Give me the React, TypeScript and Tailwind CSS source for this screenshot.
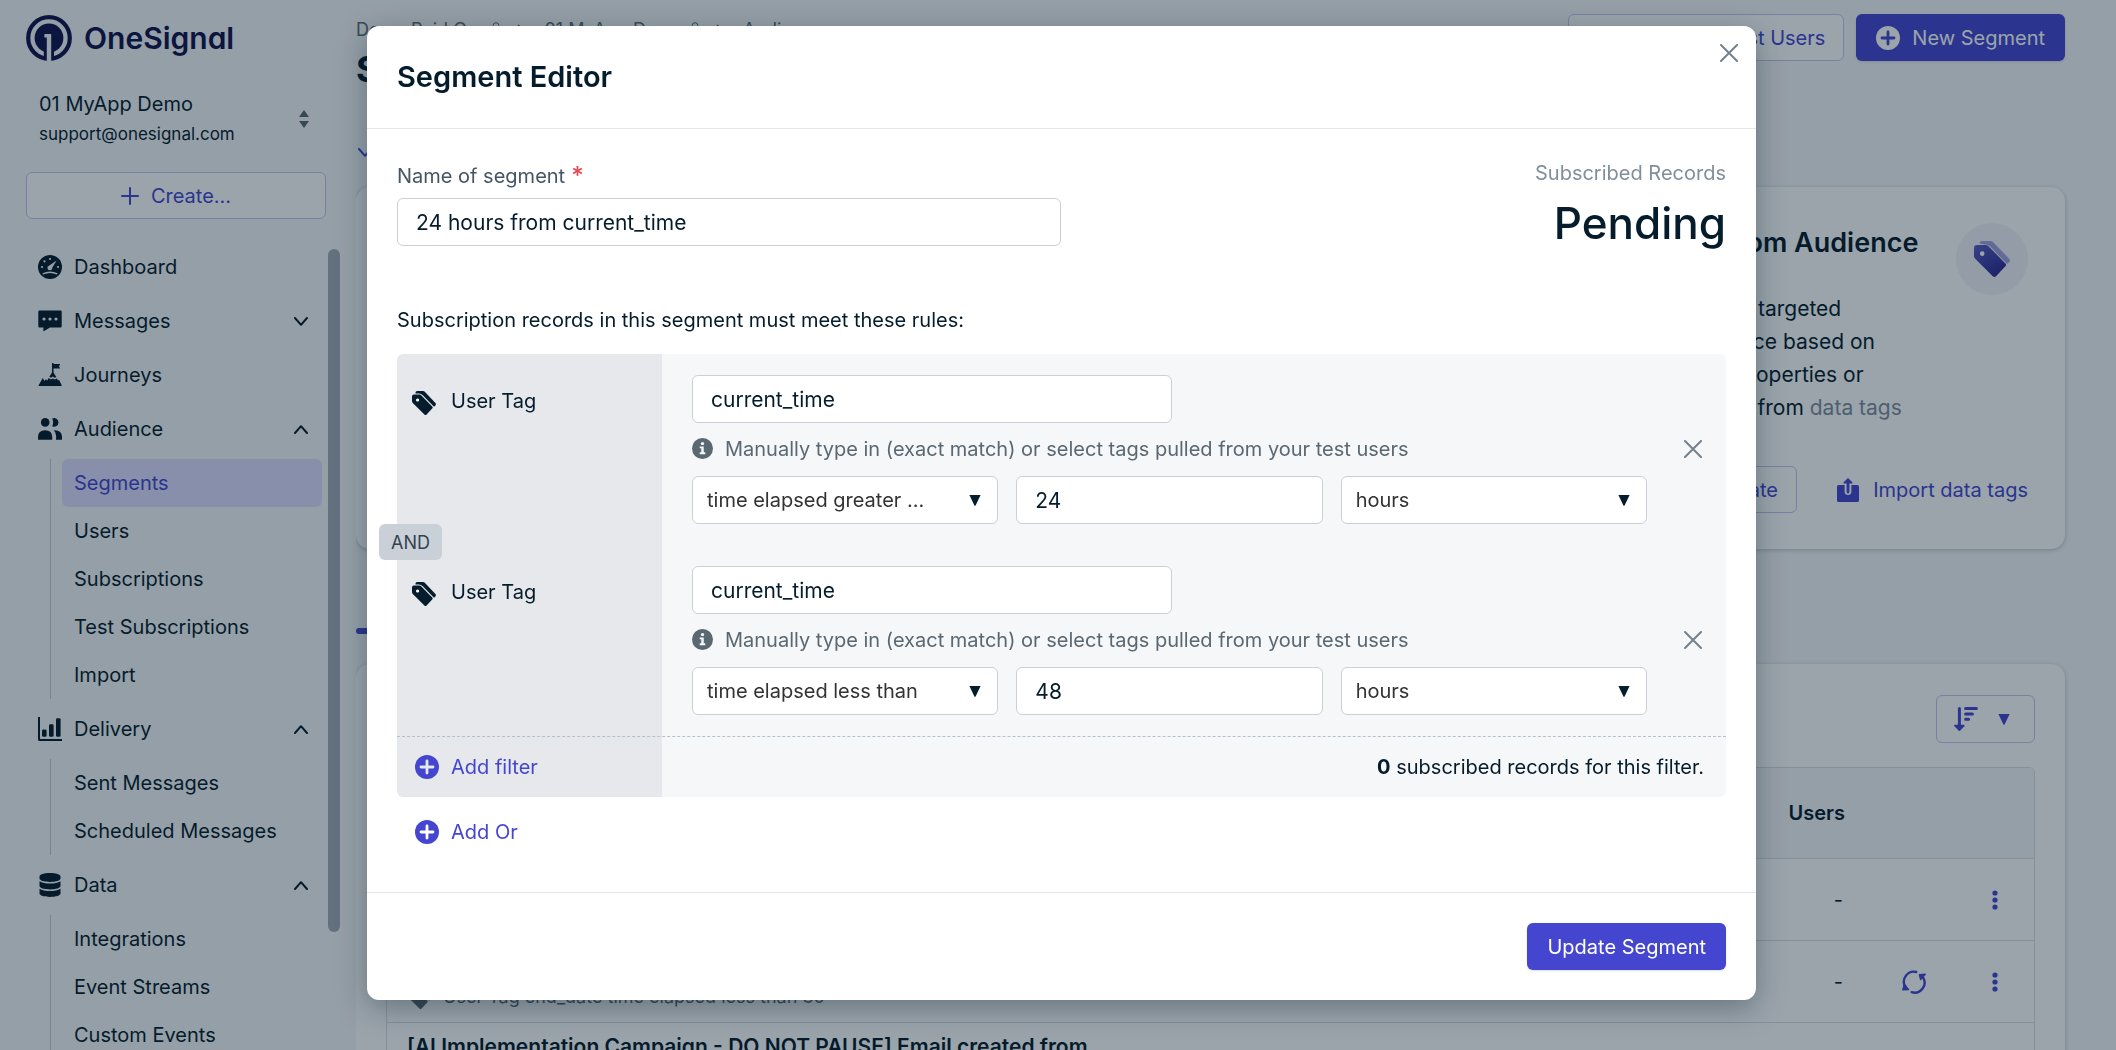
import React from 'react';
import { FaDatabase } from 'react-icons/fa';

type IconProps = { className?: string };

const LogoMark = () => (
  <svg viewBox="0 0 46 46" className="size-[46px] text-[#11124c]">
    <circle cx="23" cy="23" r="20.8" fill="none" stroke="currentColor" strokeWidth="4.2" />
    <circle cx="23" cy="23" r="14.4" fill="currentColor" />
    <path d="M17.8 34 H28 V44 H17.8 Z" fill="currentColor" />
    <path d="M18.4 19 H25.2 V46 H20.8 V22.4 H18.4 Z" fill="#f6f7f9" />
  </svg>
);

const GaugeIcon = ({ className }: IconProps) => (
  <svg viewBox="0 0 24 24" className={className}>
    <circle cx="12" cy="12" r="12" fill="currentColor" />
    <g fill="#f6f7f9">
      <circle cx="12" cy="4" r="1.1" />
      <circle cx="6.5" cy="6.3" r="1.1" />
      <circle cx="4" cy="12" r="1.1" />
      <circle cx="20" cy="12" r="1.1" />
      <path d="M18.6 5.4 L14.4 12.6 A2.5 2.5 0 1 1 11.4 10.4 Z" />
      <path d="M4.2 18.6 Q12 14.6 19.8 18.6 L18.8 19.6 Q12 16.2 5.2 19.6 Z" />
    </g>
  </svg>
);

const ChatIcon = ({ className }: IconProps) => (
  <svg viewBox="0 0 24 24" className={className}>
    <path
      d="M1.5 1.5 H22.5 A1.2 1.2 0 0 1 23.7 2.7 V17.3 A1.2 1.2 0 0 1 22.5 18.5 H12 L5.4 22.6 V18.5 H1.5 A1.2 1.2 0 0 1 .3 17.3 V2.7 A1.2 1.2 0 0 1 1.5 1.5 Z"
      fill="currentColor"
    />
    <g fill="#f6f7f9">
      <circle cx="6" cy="10" r="1.6" />
      <circle cx="12" cy="10" r="1.6" />
      <circle cx="18" cy="10" r="1.6" />
    </g>
  </svg>
);

const SummitIcon = ({ className }: IconProps) => (
  <svg viewBox="0 0 24 24" className={className} fill="currentColor">
    <path d="M14 0 H15.5 V1 H22.2 L21 3.4 L22.2 5.6 H15.5 V9.5 L18.3 14 L16.6 14.8 L14.8 13.6 L13 14.8 L11.4 13.8 L14 9.5 Z" />
    <path d="M10.6 15 L12.9 16.6 L14.8 15.4 L16.7 16.6 L18.9 15.4 L20 17.4 L21 16.8 L23.6 22 V23 H.6 V22.2 L4.8 15 L6.6 18 L8 16.2 L9.4 17.6 Z" />
  </svg>
);

const PeopleIcon = ({ className }: IconProps) => (
  <svg viewBox="0 0 24 24" className={className} fill="currentColor">
    <circle cx="7.2" cy="5.4" r="4.3" />
    <path d="M0 22.8 V20 Q0 13.2 7.2 13.2 Q14.2 13.2 14.2 20 V22.8 Z" />
    <path d="M14.2 1.6 A4.3 4.3 0 1 1 14.2 9.2 Q16 5.4 14.2 1.6 Z" />
    <path d="M15.8 13.2 Q24 12.8 24 20 V22.8 H18 Q18.8 16.6 15.8 13.2 Z" />
  </svg>
);

const BarsIcon = ({ className }: IconProps) => (
  <svg viewBox="0 0 24 24" className={className} fill="currentColor">
    <path d="M0 0 H2 V22 H24 V24 H1.6 Q0 24 0 22.4 Z" />
    <rect x="4" y="12.6" width="4.6" height="7.2" rx="1.4" />
    <rect x="11" y="7.2" width="4.6" height="12.6" rx="1.4" />
    <rect x="18" y="1.2" width="4.6" height="18.6" rx="1.4" />
  </svg>
);

const TagIcon = ({ className }: IconProps) => (
  <svg viewBox="0 0 24 24" className={className}>
    <path d="M3.5 1.6 Q3.7 0 5 0 H11 Q12 0 12.8 .8 L23.4 12 Q24.4 13.2 23.4 14.4 L22 15.8 L10.8 4.2 Q9 2.4 7 2.4 H3.5 Z" fill="currentColor" />
    <path d="M1.8 3.6 H7.6 Q8.6 3.6 9.4 4.4 L20.2 15.4 Q21.2 16.4 20.2 17.4 L14.6 23.4 Q13.5 24.4 12.4 23.4 L.8 12 Q0 11.2 0 10 V5.4 Q0 3.6 1.8 3.6 Z" fill="currentColor" />
    <circle cx="5.6" cy="9" r="1.6" fill="#fff" />
  </svg>
);

const GradientTags = () => (
  <svg viewBox="0 0 36 36" className="size-9">
    <defs>
      <linearGradient id="tagFill" x1="0" y1="0" x2="0.7" y2="1">
        <stop offset="0" stopColor="#5a5ac4" />
        <stop offset="1" stopColor="#2c2890" />
      </linearGradient>
    </defs>
    <path d="M5.5 2.5 Q5.5 0 8 0 H16.5 Q18 0 19.2 1.2 L35.2 17.8 Q36.6 19.4 35.2 21 L33 23 L16.4 5.8 Q14 3.4 11 3.4 L5.5 2.5 Z" fill="#a19fdd" />
    <path d="M3 4 H11.6 Q13.2 4 14.4 5.2 L31.4 22.4 Q32.8 23.8 31.4 25.2 L22 35.2 Q20.4 36.6 18.8 35.2 L1.2 17.8 Q0 16.6 0 15 V7 Q0 4 3 4 Z" fill="url(#tagFill)" />
    <circle cx="8.2" cy="12.6" r="2.3" fill="#fff" />
  </svg>
);

const PlusCircle = ({ className }: IconProps) => (
  <svg viewBox="0 0 24 24" className={className}>
    <circle cx="12" cy="12" r="12" fill="currentColor" />
    <path d="M12 6 V18 M6 12 H18" strokeWidth="2.8" strokeLinecap="round" className="stroke-(--plus)" />
  </svg>
);

const InfoIcon = () => (
  <svg viewBox="0 0 24 24" className="size-[21px] text-[#5a6872]">
    <circle cx="12" cy="12" r="12" fill="currentColor" />
    <circle cx="12" cy="6.4" r="1.9" fill="#f6f7f9" />
    <path d="M8.8 9.6 H13.4 V16.4 H15.2 V18.6 H8.8 V16.4 H10.6 V11.8 H8.8 Z" fill="#f6f7f9" />
  </svg>
);

const Cross = () => (
  <svg viewBox="0 0 18 18" className="size-[18px]" fill="none" stroke="#74808b" strokeWidth="2" strokeLinecap="round">
    <path d="M1 1 L17 17 M17 1 L1 17" />
  </svg>
);

const Triangle = ({ className }: IconProps) => (
  <svg viewBox="0 0 12 11" className={className} fill="currentColor">
    <path d="M.4 0 H11.6 L6.6 10.4 Q6 11.2 5.4 10.4 Z" />
  </svg>
);

const Chevron = ({ up }: { up?: boolean }) => (
  <svg viewBox="0 0 14 9" className="h-[9px] w-3.5" fill="none" stroke="currentColor" strokeWidth="2" strokeLinecap="round" strokeLinejoin="round">
    <path d={up ? 'M1 8 L7 1.2 L13 8' : 'M1 1 L7 7.8 L13 1'} />
  </svg>
);

// The arrow sits in a slot cut out of the tray
const UploadIcon = () => (
  <svg viewBox="0 0 22 24" className="h-6 w-[22px]" fill="currentColor">
    <path d="M1.6 7 H7.6 V13.6 A3.4 3.4 0 0 0 14.4 13.6 V7 H20.4 Q22 7 22 8.6 V22.4 Q22 24 20.4 24 H1.6 Q0 24 0 22.4 V8.6 Q0 7 1.6 7 Z" />
    <path d="M11 0 L15.6 4.6 Q15.8 5.6 14.8 5.6 H12.4 V14 A1.4 1.4 0 0 1 9.6 14 V5.6 H7.2 Q6.2 5.6 6.4 4.6 Z" />
  </svg>
);

const SortIcon = () => (
  <svg viewBox="0 0 24 25" className="h-[25px] w-6" fill="none" stroke="currentColor" strokeWidth="3" strokeLinecap="round">
    <path d="M5.4 1.5 V19 M11.6 1.6 H22.4 M11.6 7 H18.4 M11.6 12.2 H14.6" />
    <path d="M1 18.6 H9.8 L5.4 23.2 Z" fill="currentColor" strokeWidth="1.6" strokeLinejoin="round" />
  </svg>
);

const RefreshIcon = () => (
  <svg viewBox="0 0 24 24" className="size-6" fill="none" stroke="currentColor" strokeWidth="2.4" strokeLinecap="round">
    <path d="M14.2 2 A10 10 0 0 0 3.4 17" />
    <path d="M9.6 22.2 A10 10 0 0 0 20.8 7" />
    <path d="M.8 19.8 L2.4 14.4 L6.6 19.6 Z" fill="currentColor" strokeWidth="1.4" strokeLinejoin="round" />
    <path d="M23.2 4.2 L17.4 4.6 L18.6 9.6 Z" fill="currentColor" strokeWidth="1.4" strokeLinejoin="round" />
  </svg>
);

const DotsIcon = () => (
  <svg viewBox="0 0 6 20" className="h-5 w-1.5" fill="currentColor">
    <circle cx="3" cy="3" r="2.6" />
    <circle cx="3" cy="10" r="2.6" />
    <circle cx="3" cy="17" r="2.6" />
  </svg>
);

const navGroups = [
  { label: 'Dashboard', Icon: GaugeIcon },
  { label: 'Messages', Icon: ChatIcon, open: false },
  { label: 'Journeys', Icon: SummitIcon },
  {
    label: 'Audience',
    Icon: PeopleIcon,
    open: true,
    items: ['Segments', 'Users', 'Subscriptions', 'Test Subscriptions', 'Import'],
  },
  { label: 'Delivery', Icon: BarsIcon, open: true, items: ['Sent Messages', 'Scheduled Messages'] },
  { label: 'Data', Icon: FaDatabase, open: true, items: ['Integrations', 'Event Streams', 'Custom Events'] },
];

const Sidebar = () => (
  <aside className="flex h-screen w-[356px] shrink-0 flex-col overflow-hidden">
    <div className="flex items-center gap-3 pt-[15px] pl-[26px]">
      <LogoMark />
      <span className="text-[30px] leading-[46px] font-semibold text-[#11124c] [font-feature-settings:'cv11','ss03']">
        OneSignal
      </span>
    </div>
    <button className="mt-7 mr-[47px] ml-[39px] flex items-center justify-between text-left">
      <span>
        <span className="block leading-[30px]">01 MyApp Demo</span>
        <span className="block text-[17px] leading-[30px]">support@onesignal.com</span>
      </span>
      <svg viewBox="0 0 10 18" className="h-[18px] w-2.5 text-[#5a6872]" fill="currentColor">
        <path d="M5 0 L10 7 H0 Z M5 18 L10 11 H0 Z" />
      </svg>
    </button>
    <button className="mt-[23px] mr-[30px] ml-[26px] flex h-[47px] shrink-0 items-center justify-center gap-3 rounded-md border border-[#c5c3f5] bg-white text-[#4546d0]">
      <svg viewBox="0 0 18 18" className="size-[18px]" stroke="currentColor" strokeWidth="2" strokeLinecap="round">
        <path d="M9 1 V17 M1 9 H17" />
      </svg>
      Create...
    </button>
    <div className="mt-6 flex min-h-0 flex-1">
      <nav className="flex flex-1 flex-col gap-1.5 pl-[38px]">
        {navGroups.map(({ label, Icon, open, items }) => (
          <div key={label}>
            <a href="#" className="flex h-12 items-center pr-5">
              <Icon className="mr-3 size-6" />
              <span className="flex-1">{label}</span>
              {open !== undefined && <Chevron up={open} />}
            </a>
            {items && (
              <div className="mt-1.5 ml-3 border-l border-[#c3c9d0] pl-[11px]">
                {items.map((item) => (
                  <a
                    key={item}
                    href="#"
                    className={
                      item === 'Segments'
                        ? 'mr-1.5 flex h-12 items-center rounded-md bg-[#dfdcfd] pl-3 text-[#4546d0]'
                        : 'mr-1.5 flex h-12 items-center pl-3'
                    }
                  >
                    {item}
                  </a>
                ))}
              </div>
            )}
          </div>
        ))}
      </nav>
      <div className="mt-1.5 mr-4 h-[683px] w-3 rounded-full bg-[#a2abb5]" />
    </div>
  </aside>
);

const SegmentTable = () => (
  <table className="mt-6 w-full table-fixed border-separate border-spacing-0 overflow-hidden rounded-t-md border border-[#d9dee3]">
    <thead>
      <tr className="h-[91px] bg-[#f6f7f9]">
        <th className="border-b border-[#d9dee3] pl-5 text-left font-semibold">Name</th>
        <th className="w-[200px] border-b border-[#d9dee3] pr-[27px] text-right font-semibold">Users</th>
        <th className="w-[84px] border-b border-[#d9dee3]" />
        <th className="w-[78px] border-b border-[#d9dee3]" />
      </tr>
    </thead>
    <tbody>
      {[
        { name: 'All Users', rule: '', refresh: false },
        { name: 'End Date', rule: 'User Tag end_date time elapsed less than 30', refresh: true },
        { name: '[AI Implementation Campaign - DO NOT PAUSE] Email created from', rule: '', refresh: false },
      ].map(({ name, rule, refresh }) => (
        <tr key={name} className="h-[82px]">
          <td className="border-b border-[#d9dee3] py-2 pl-5 align-top leading-8">
            <div className="truncate text-[21px] font-semibold">{name}</div>
            {rule && (
              <div className="flex items-center gap-3 text-[18px] text-[#5a6872]">
                <TagIcon className="size-6" />
                {rule}
              </div>
            )}
          </td>
          <td className="border-b border-[#d9dee3] pr-[29px] text-right">-</td>
          <td className="border-b border-[#d9dee3] text-[#4546d0]">
            {refresh && (
              <button aria-label="Refresh" className="mx-auto flex">
                <RefreshIcon />
              </button>
            )}
          </td>
          <td className="border-b border-[#d9dee3] text-[#4546d0]">
            <button aria-label="More" className="mx-auto flex">
              <DotsIcon />
            </button>
          </td>
        </tr>
      ))}
    </tbody>
  </table>
);

const Crumb = ({ label }: { label: string }) => (
  <span className="flex items-center">
    {label}
    <svg viewBox="0 0 8 16" className="ml-2 h-4 w-2" fill="none" stroke="currentColor">
      <circle cx="4" cy="3.5" r="2.8" />
    </svg>
    <svg viewBox="0 0 8 12" className="mr-5 ml-4 h-3 w-2" fill="none" stroke="currentColor" strokeWidth="1.6">
      <path d="M2 1 L7 6 L2 11" />
    </svg>
  </span>
);

const AudiencePage = () => (
  <main className="h-screen min-w-0 flex-1 overflow-hidden pr-[51px]">
    <header className="flex items-start justify-between pt-3.5">
      <div>
        <div className="flex pt-0.5 text-[18px] leading-7 text-[#5a6872]">
          <Crumb label="Demo Paid Org" />
          <Crumb label="01 MyApp Demo" />
          Audience
        </div>
        <h1 className="mt-0.5 text-[36px] leading-[46px] font-bold">Segments</h1>
      </div>
      <div className="flex gap-3">
        <button className="h-[47px] rounded-md border border-[#c5c3f5] bg-white pr-[18px] pl-[88px] text-[#4546d0]">
          Import Test Users
        </button>
        <button className="flex h-[47px] items-center gap-3 rounded-md bg-[#4546d0] px-5 text-white shadow-sm [--plus:#4546d0]">
          <PlusCircle className="size-6" />
          New Segment
        </button>
      </div>
    </header>
    <div className="mt-12 ml-0.5 flex h-6 items-center text-[#4546d0]">
      <Chevron />
    </div>
    <section className="mt-[23px] flex h-[362px] justify-end rounded-[14px] bg-white pr-[37px] shadow-[0_1px_4px_rgba(5,28,44,0.25)]">
      <div className="flex w-[342px] flex-col pt-9">
        <div className="flex justify-between">
          <div>
            <h2 className="mt-1 text-[27px] leading-8 font-semibold whitespace-nowrap">Custom Audience</h2>
            <p className="mt-[33px] text-[21px] leading-[33px]">
              Create targeted
              <br />
              audience based on
              <br />
              user properties or
              <br />
              events from <a href="#" className="text-[#7d8c9d]">data tags</a>
            </p>
          </div>
          <div className="flex size-[72px] shrink-0 items-center justify-center rounded-full bg-[#f3f3f9]">
            <GradientTags />
          </div>
        </div>
        <div className="mt-[42px] flex items-center justify-between text-[#4546d0]">
          <button className="h-[47px] rounded-md border border-[#c5c3f5] pr-[18px] pl-7">Create</button>
          <a href="#" className="flex items-center gap-3.5">
            <UploadIcon />
            Import data tags
          </a>
        </div>
      </div>
    </section>
    <div className="mt-[79px] h-1.5 w-40 rounded-full bg-[#4546d0]" />
    <section className="mt-[30px] h-[500px] rounded-[14px] bg-white px-[30px] pt-[31px] shadow-[0_1px_4px_rgba(5,28,44,0.25)]">
      <div className="flex justify-end">
        <button aria-label="Sort" className="flex h-12 items-center gap-5 rounded-md border border-[#c5c3f5] pr-6 pl-[17px] text-[#4546d0]">
          <SortIcon />
          <Triangle className="h-[11px] w-3" />
        </button>
      </div>
      <SegmentTable />
    </section>
  </main>
);

const boxClass = 'h-12 w-full min-w-0 rounded-md border border-[#c9d0d8] bg-white';

const Dropdown = ({ label, value }: { label: string; value: string }) => (
  <div className="relative">
    <select aria-label={label} className={`${boxClass} appearance-none pr-12 pl-3.5 text-[#333]`}>
      <option>{value}</option>
    </select>
    <Triangle className="pointer-events-none absolute top-[19px] right-[17px] h-[11px] w-3" />
  </div>
);

const FilterRow = ({ operator, amount }: { operator: string; amount: string }) => (
  <div className="flex">
    <div className="flex w-[265px] shrink-0 items-start gap-[15px] pt-2.5 pl-[15px]">
      <TagIcon className="mt-1.5 size-6" />
      <span className="leading-8">User Tag</span>
    </div>
    <div className="flex-1 pl-[30px]">
      <input aria-label="Tag key" defaultValue="current_time" className={`${boxClass} max-w-[480px] px-[18px] text-[21px]`} />
      <div className="flex h-[53px] items-center gap-3 pb-0.5 text-[#5a6872]">
        <InfoIcon />
        Manually type in (exact match) or select tags pulled from your test users
      </div>
      <div className="grid grid-cols-3 gap-[18px]">
        <Dropdown label="Operator" value={operator} />
        <input aria-label="Amount" defaultValue={amount} className={`${boxClass} px-[18px] text-[21px]`} />
        <Dropdown label="Unit" value="hours" />
      </div>
    </div>
    <div className="flex w-[79px] justify-center pt-[65px] pl-3">
      <button aria-label="Remove filter" className="size-[18px]">
        <Cross />
      </button>
    </div>
  </div>
);

const SegmentEditor = () => (
  <div role="dialog" aria-label="Segment Editor" className="relative w-[1389px] rounded-xl bg-white shadow-[0_8px_30px_rgba(5,28,44,0.35)]">
    <header className="flex h-[103px] items-center border-b border-[#e3e6ea] px-[30px]">
      <h2 className="text-[29px] leading-9 font-semibold">Segment Editor</h2>
      <button aria-label="Close" className="absolute top-[18px] right-[18px]">
        <Cross />
      </button>
    </header>
    <div className="px-[30px] pt-7">
      <div className="flex justify-between">
        <div className="w-[664px]">
          <label htmlFor="segment-name" className="flex h-[41px] pt-[3px] leading-8 text-[#465562]">
            Name of segment
            <span className="ml-1.5 text-[24px] font-medium text-[#e5484d]">*</span>
          </label>
          <input id="segment-name" defaultValue="24 hours from current_time" className={`${boxClass} px-[18px] text-[21px]`} />
        </div>
        <div className="text-right">
          <div className="leading-8 text-[#828f9b]">Subscribed Records</div>
          <div className="mt-1 text-[44px] leading-[60px] font-medium">Pending</div>
        </div>
      </div>
      <p className="mt-[51px] leading-8">Subscription records in this segment must meet these rules:</p>

      <section className="mt-[18px] rounded-md bg-[linear-gradient(to_right,#e6e8ec_265px,#f6f7f9_265px)]">
        <div className="py-[21px]">
          <FilterRow operator="time elapsed greater ..." amount="24" />
          <div className="relative h-[42px]">
            <span className="absolute -left-[18px] flex h-9 w-[63px] items-center justify-center rounded-md bg-[#c9d0d8] text-[18px] text-[#33424f]">
              AND
            </span>
          </div>
          <FilterRow operator="time elapsed less than" amount="48" />
        </div>
        <div className="flex h-[61px] items-center justify-between border-t border-dashed border-[#b4c0cb] pr-[22px] pl-[18px]">
          <button className="flex items-center gap-3 text-[#4546d0] [--plus:#e6e8ec]">
            <PlusCircle className="size-6" />
            Add filter
          </button>
          <span>
            <b className="font-bold">0</b> subscribed records for this filter.
          </span>
        </div>
      </section>
      <button className="mt-[19px] ml-[18px] flex h-8 items-center gap-3 text-[#4546d0] [--plus:#fff]">
        <PlusCircle className="size-6" />
        Add Or
      </button>
    </div>
    <footer className="mt-11 flex h-[108px] items-center justify-end border-t border-[#e3e6ea] px-[30px]">
      <button className="h-[47px] rounded-md bg-[#4546d0] px-5 text-white shadow-sm">Update Segment</button>
    </footer>
  </div>
);

export default function App() {
  return (
    <div className="flex h-screen overflow-hidden bg-[#f6f7f9] font-[Inter,sans-serif] text-[20px] text-[#051c2c] [font-optical-sizing:none]">
      <Sidebar />
      <AudiencePage />
      <div className="fixed inset-0 flex items-start justify-center bg-[#051c2c]/40 pt-[26px] pl-[7px]">
        <SegmentEditor />
      </div>
    </div>
  );
}
